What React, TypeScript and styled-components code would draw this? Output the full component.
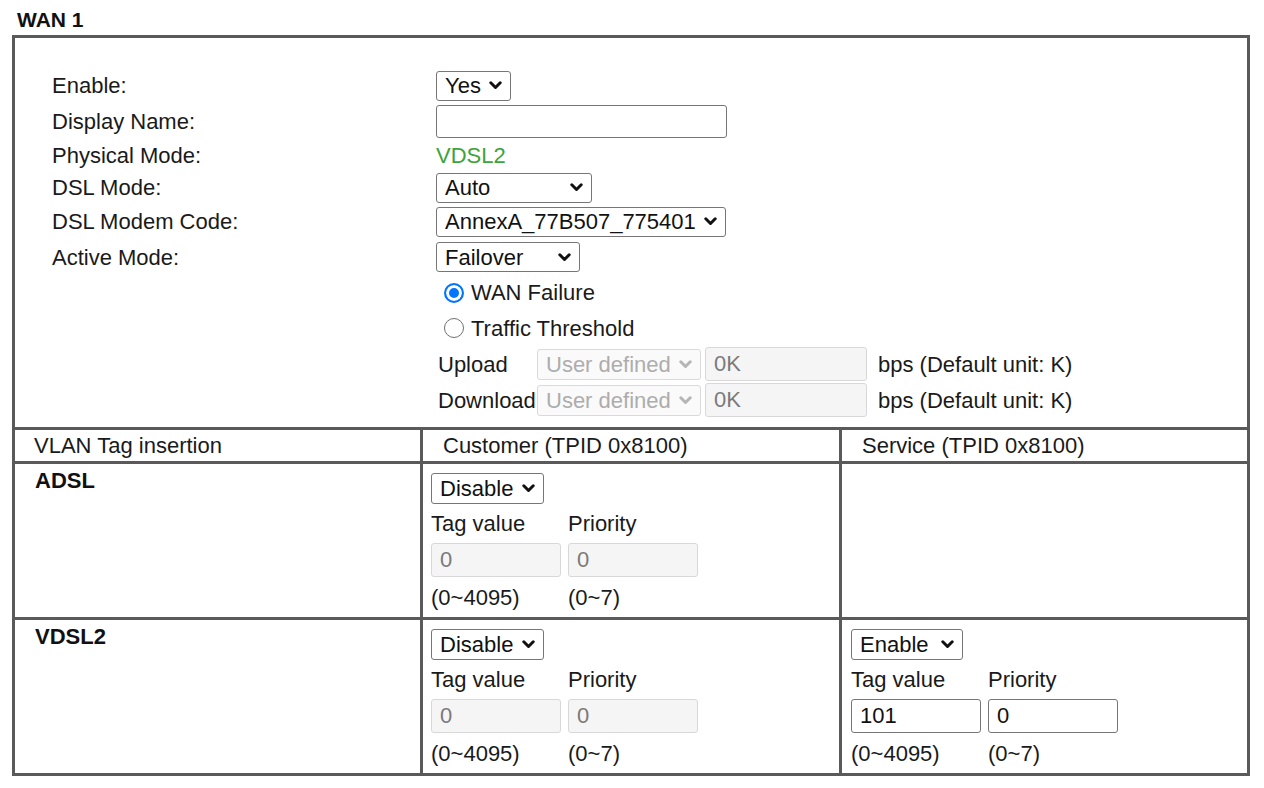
import React from "react";
import styled, { createGlobalStyle } from "styled-components";

const GlobalStyle = createGlobalStyle`
  html, body { margin: 0; padding: 0; background: #fff; }
  body {
    font-family: "Liberation Sans", Arial, Helvetica, sans-serif;
    color: #1a1a1a;
  }
  * { box-sizing: border-box; }
`;

const LINE = "#5a5a5a";

const Page = styled.div`
  padding: 8px 0 12px 12px;
`;

const Title = styled.h2`
  margin: 0 0 3px 5px;
  font-size: 21px;
  line-height: 24px;
  font-weight: bold;
  color: #111;
`;

const Frame = styled.div`
  width: 1238px;
  border: 3px solid ${LINE};
  background: #fff;
`;

const General = styled.div`
  padding: 29px 0 9px 37px;
`;

const FormRow = styled.div<{ $h: number }>`
  display: grid;
  grid-template-columns: 384px 1fr;
  align-items: center;
  height: ${(p) => p.$h}px;
`;

const Label = styled.div`
  font-size: 22px;
  line-height: 25px;
  white-space: nowrap;
`;

const ModeValue = styled.div`
  font-size: 22px;
  line-height: 25px;
  color: #3ba43b;
`;

const SelectBox = styled.div<{ $w: number; $h?: number; $disabled?: boolean }>`
  display: flex;
  align-items: center;
  justify-content: space-between;
  gap: 4px;
  width: ${(p) => p.$w}px;
  height: ${(p) => p.$h ?? 30}px;
  padding: 0 8px 0 8px;
  border: 1px solid ${(p) => (p.$disabled ? "#dadada" : "#767676")};
  border-radius: 3px;
  background: ${(p) => (p.$disabled ? "#fafafa" : "#fff")};
  color: ${(p) => (p.$disabled ? "#adadad" : "#111")};
  font-size: 22px;
  line-height: 25px;
  white-space: nowrap;
  overflow: hidden;
`;

const Field = styled.input<{ $w: number; $h?: number; $disabled?: boolean }>`
  display: block;
  width: ${(p) => p.$w}px;
  height: ${(p) => p.$h ?? 34}px;
  margin: 0;
  padding: 0 8px;
  border: 1px solid ${(p) => (p.$disabled ? "#d8d8d8" : "#767676")};
  border-radius: 3px;
  background: ${(p) => (p.$disabled ? "#f5f5f5" : "#fff")};
  color: ${(p) => (p.$disabled ? "#7a7a7a" : "#111")};
  font-family: inherit;
  font-size: 22px;
  line-height: 25px;
  outline: none;
`;

const RadioLine = styled.div`
  display: flex;
  align-items: center;
  gap: 7px;
  padding-left: 8px;
  font-size: 22px;
  line-height: 25px;
`;

const RadioMark = styled.span<{ $on?: boolean }>`
  display: inline-block;
  width: 20px;
  height: 20px;
  border-radius: 50%;
  border: ${(p) => (p.$on ? "2px solid #0075ff" : "1.5px solid #6f6f6f")};
  background: ${(p) => (p.$on ? "#0075ff" : "#fff")};
  box-shadow: ${(p) => (p.$on ? "inset 0 0 0 3px #fff" : "none")};
`;

const ThresholdLine = styled.div`
  display: flex;
  align-items: center;
  padding-left: 2px;
  font-size: 22px;
  line-height: 25px;
`;

const ThresholdName = styled.span`
  width: 99px;
`;

const UnitText = styled.span`
  margin-left: 11px;
  white-space: nowrap;
`;

const Gap = styled.span<{ $w: number }>`
  display: inline-block;
  width: ${(p) => p.$w}px;
`;

const VlanGrid = styled.div`
  display: grid;
  grid-template-columns: 405px 416px 405px;
  grid-template-rows: 31px 153px 153px;
  gap: 3px;
  background: ${LINE};
  border-top: 3px solid ${LINE};
`;

const HeadCell = styled.div<{ $pl: number }>`
  display: flex;
  align-items: center;
  padding-left: ${(p) => p.$pl}px;
  background: #fff;
  font-size: 22px;
  line-height: 25px;
`;

const NameCell = styled.div`
  padding: 4px 0 0 20px;
  background: #fff;
  font-size: 22px;
  line-height: 25px;
  font-weight: bold;
  color: #111;
`;

const TagCell = styled.div<{ $pl: number }>`
  display: flex;
  flex-direction: column;
  align-items: flex-start;
  padding: 9px 0 0 ${(p) => p.$pl}px;
  background: #fff;
`;

const EmptyCell = styled.div`
  background: #fff;
`;

const Pair = styled.div<{ $mt: number }>`
  display: grid;
  grid-template-columns: 130px 130px;
  column-gap: 7px;
  margin-top: ${(p) => p.$mt}px;
  font-size: 22px;
  line-height: 25px;
`;

const Chevron: React.FC<{ color?: string }> = ({ color = "#111" }) => (
  <svg width="13" height="9" viewBox="0 0 13 9" style={{ flex: "none" }}>
    <path
      d="M1.8 1.8 L6.5 6.5 L11.2 1.8"
      fill="none"
      stroke={color}
      strokeWidth="3"
      strokeLinecap="round"
      strokeLinejoin="round"
    />
  </svg>
);

const Select: React.FC<{ w: number; h?: number; disabled?: boolean; children: React.ReactNode }> = ({
  w,
  h,
  disabled,
  children,
}) => (
  <SelectBox $w={w} $h={h} $disabled={disabled}>
    <span>{children}</span>
    <Chevron color={disabled ? "#b5b5b5" : "#111"} />
  </SelectBox>
);

const TagBlock: React.FC<{ pl: number; mode: string; modeW: number; tag: string; prio: string; disabled: boolean }> = ({
  pl,
  mode,
  modeW,
  tag,
  prio,
  disabled,
}) => (
  <TagCell $pl={pl}>
    <Select w={modeW} h={31}>
      {mode}
    </Select>
    <Pair $mt={7}>
      <span>Tag value</span>
      <span>Priority</span>
    </Pair>
    <Pair $mt={7}>
      <Field $w={130} $disabled={disabled} value={tag} readOnly />
      <Field $w={130} $disabled={disabled} value={prio} readOnly />
    </Pair>
    <Pair $mt={8}>
      <span>(0~4095)</span>
      <span>(0~7)</span>
    </Pair>
  </TagCell>
);

export default function App() {
  return (
    <>
      <GlobalStyle />
      <Page>
        <Title>WAN 1</Title>
        <Frame>
          <General>
            <FormRow $h={37}>
              <Label>Enable:</Label>
              <Select w={75}>Yes</Select>
            </FormRow>
            <FormRow $h={35}>
              <Label>Display Name:</Label>
              <Field $w={291} $h={33} value="" readOnly />
            </FormRow>
            <FormRow $h={32}>
              <Label>Physical Mode:</Label>
              <ModeValue>VDSL2</ModeValue>
            </FormRow>
            <FormRow $h={33}>
              <Label>DSL Mode:</Label>
              <Select w={156}>Auto</Select>
            </FormRow>
            <FormRow $h={35}>
              <Label>DSL Modem Code:</Label>
              <Select w={290}>AnnexA_77B507_775401</Select>
            </FormRow>
            <FormRow $h={36}>
              <Label>Active Mode:</Label>
              <Select w={144}>Failover</Select>
            </FormRow>
            <FormRow $h={35}>
              <span />
              <RadioLine>
                <RadioMark $on />
                WAN Failure
              </RadioLine>
            </FormRow>
            <FormRow $h={36}>
              <span />
              <RadioLine>
                <RadioMark />
                Traffic Threshold
              </RadioLine>
            </FormRow>
            <FormRow $h={36}>
              <span />
              <ThresholdLine>
                <ThresholdName>Upload</ThresholdName>
                <Select w={164} h={31} disabled>
                  User defined
                </Select>
                <Gap $w={4} />
                <Field $w={162} $disabled value="0K" readOnly />
                <UnitText>bps (Default unit: K)</UnitText>
              </ThresholdLine>
            </FormRow>
            <FormRow $h={36}>
              <span />
              <ThresholdLine>
                <ThresholdName>Download</ThresholdName>
                <Select w={164} h={31} disabled>
                  User defined
                </Select>
                <Gap $w={4} />
                <Field $w={162} $disabled value="0K" readOnly />
                <UnitText>bps (Default unit: K)</UnitText>
              </ThresholdLine>
            </FormRow>
          </General>
          <VlanGrid>
            <HeadCell $pl={19}>VLAN Tag insertion</HeadCell>
            <HeadCell $pl={20}>Customer (TPID 0x8100)</HeadCell>
            <HeadCell $pl={20}>Service (TPID 0x8100)</HeadCell>

            <NameCell>ADSL</NameCell>
            <TagBlock pl={8} mode="Disable" modeW={113} tag="0" prio="0" disabled />
            <EmptyCell />

            <NameCell>VDSL2</NameCell>
            <TagBlock pl={8} mode="Disable" modeW={113} tag="0" prio="0" disabled />
            <TagBlock pl={9} mode="Enable" modeW={112} tag="101" prio="0" disabled={false} />
          </VlanGrid>
        </Frame>
      </Page>
    </>
  );
}
